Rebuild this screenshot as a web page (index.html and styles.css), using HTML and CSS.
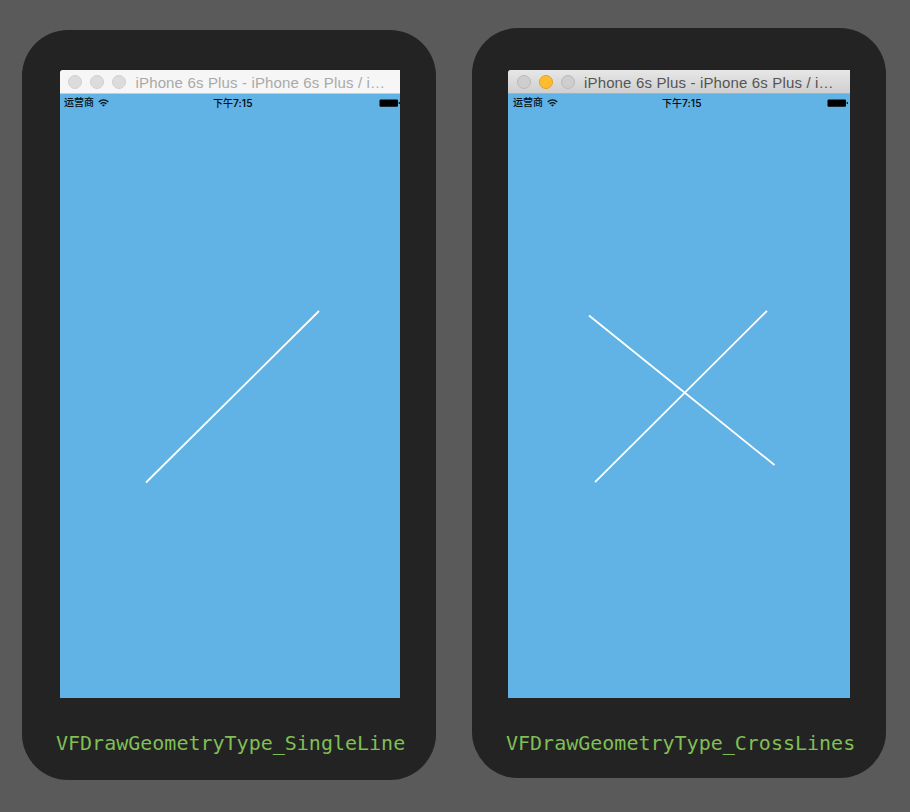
FILE: index.html
```html
<!DOCTYPE html>
<html lang="zh-CN">
<head>
<meta charset="utf-8">
<title>VFDrawGeometryType</title>
<link rel="stylesheet" href="styles.css">
</head>
<body>
<main class="stage">
  <section class="phone phone-single">
    <div class="window inactive">
      <header class="titlebar">
        <span class="dot"></span><span class="dot"></span><span class="dot"></span>
        <span class="title">iPhone 6s Plus - iPhone 6s Plus / i…</span>
      </header>
      <div class="statusbar">
        <span class="carrier">运营商</span>
        <svg class="wifi" viewBox="0 0 11 8"><path d="M.7 3Q5.5-1.2 10.3 3M2.6 4.9Q5.5 2.4 8.4 4.9"/><path class="fill" d="M3.9 6Q5.5 4.9 7.1 6L5.5 7.6Z"/></svg>
        <span class="time">下午<b>7:15</b></span>
        <svg class="battery" viewBox="0 0 22 8"><rect x=".5" y=".5" width="18.5" height="7.2" rx="1.2"/><rect x="19.7" y="3" width="1.2" height="2" rx=".5"/></svg>
      </div>
      <svg class="canvas" viewBox="0 0 340 586"><path d="M86 370.5L259 199"/></svg>
    </div>
    <p class="label">VFDrawGeometryType_SingleLine</p>
  </section>
  <section class="phone phone-cross">
    <div class="window active">
      <header class="titlebar">
        <span class="dot"></span><span class="dot yellow"></span><span class="dot"></span>
        <span class="title">iPhone 6s Plus - iPhone 6s Plus / i…</span>
      </header>
      <div class="statusbar">
        <span class="carrier">运营商</span>
        <svg class="wifi" viewBox="0 0 11 8"><path d="M.7 3Q5.5-1.2 10.3 3M2.6 4.9Q5.5 2.4 8.4 4.9"/><path class="fill" d="M3.9 6Q5.5 4.9 7.1 6L5.5 7.6Z"/></svg>
        <span class="time">下午<b>7:15</b></span>
        <svg class="battery" viewBox="0 0 22 8"><rect x=".5" y=".5" width="18.5" height="7.2" rx="1.2"/><rect x="19.7" y="3" width="1.2" height="2" rx=".5"/></svg>
      </div>
      <svg class="canvas" viewBox="0 0 342 586"><path d="M87 370.2L259 198.8M81 203.5L266.5 353"/></svg>
    </div>
    <p class="label">VFDrawGeometryType_CrossLines</p>
  </section>
</main>
</body>
</html>
```
FILE: styles.css
```css
* { box-sizing: border-box; }
body { margin: 0; background: #5a5a5a; }
.stage {
  display: flex;
  gap: 36px;
  height: 812px;
  padding: 28px 22px 0;
  overflow: hidden;
}
.phone {
  flex: none;
  width: 414px;
  height: 750px;
  border-radius: 46px;
  background: #232323;
}
.phone-single { margin-top: 2px; padding: 40px 0 0 38px; }
.phone-cross { padding: 42px 0 0 36px; }
.window {
  display: flex;
  flex-direction: column;
  height: 628px;
  overflow: hidden;
  border-top-left-radius: 3px;
  background: #61b2e5;
}
.inactive { width: 340px; }
.active { width: 342px; }
.titlebar {
  display: flex;
  align-items: center;
  flex: none;
  gap: 8px;
  height: 24px;
  padding: 1px 0 0 8px;
  border-bottom: 1px solid #c9cdcf;
  background: #f6f6f6;
  white-space: nowrap;
}
.active .titlebar {
  border-bottom-color: #adb0b1;
  background: linear-gradient(#e7e7e7, #cfcfcf);
}
.dot {
  flex: none;
  width: 14px;
  height: 14px;
  border: 1px solid #d1d1d1;
  border-radius: 50%;
  background: #dcdcdc;
}
.active .dot { border-color: #b9b9b9; background: #cecece; }
.active .yellow { border-color: #e1a02d; background: #ffbd2e; }
.active .titlebar { padding-left: 8.5px; }
.title {
  margin-left: 1.5px;
  padding-top: 2px;
  color: #a9a9a9;
  font: 15px/22px "Liberation Sans", sans-serif;
  letter-spacing: .15px;
}
.active .title { color: #555; }
.statusbar {
  display: flex;
  align-items: center;
  flex: none;
  height: 18px;
  padding-left: 4px;
  color: #071016;
  font: 10px/18px "Liberation Sans", "Noto Sans CJK SC", sans-serif;
  white-space: nowrap;
}
.active .statusbar { padding-left: 5px; }
.carrier { flex: none; width: 30px; font-weight: 500; }
.wifi {
  flex: none;
  width: 11px;
  height: 8px;
  margin-left: 4px;
  fill: none;
  stroke: #071016;
  stroke-width: 1.3;
}
.wifi .fill { fill: #071016; stroke: none; }
.time { flex: none; width: 41px; margin-left: 104px; font-weight: 500; }
.time b {
  font-family: Inter, sans-serif;
  font-size: 10px;
  font-weight: 600;
  letter-spacing: .1px;
}
.battery { flex: none; width: 22px; height: 8px; margin-left: 125px; }
.active .battery { margin-left: 124px; }
.canvas {
  flex: none;
  width: 100%;
  height: 586px;
  fill: none;
  stroke: #fff;
  stroke-width: 1.8;
}
.label {
  margin: 33px 0 0 -4px;
  color: #7fbf55;
  font: 20px/24px "DejaVu Sans Mono", monospace;
}
.phone-cross .label { margin-left: -2px; }
```
